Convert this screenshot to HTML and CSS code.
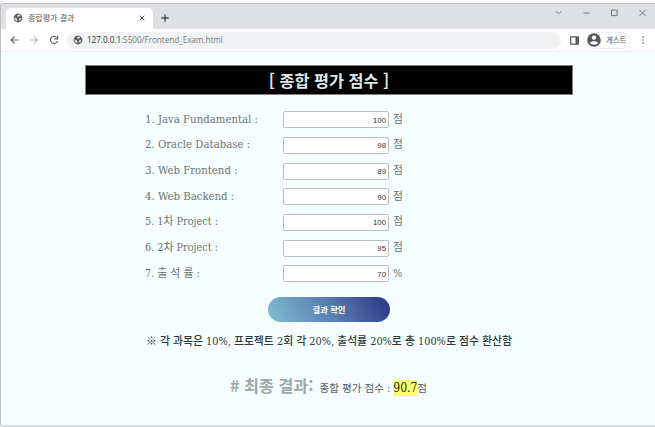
FILE: index.html
```html
<!DOCTYPE html>
<html lang="ko">
<head>
<meta charset="UTF-8">
<title>종합평가 결과</title>
<link rel="stylesheet" href="styles.css">
</head>
<body>
<svg class="defs" width="0" height="0"><symbol id="globe" viewBox="0 0 10 10"><circle cx="5" cy="5" r="4.4" fill="#5b5e62"/><path d="M1.4 4.3 3.8 5.6 4.5 8.2C2.7 8 1.3 6.5 1.4 4.3M5 1.4l2.3.5L6 3.7 4.1 3.5zM6.3 5.2l2.2.2L7 7.8 5.9 6.8z" fill="#e8e9eb"/></symbol></svg>
<div class="window">
  <header class="tabs">
    <div class="tab"><svg class="globe"><use href="#globe"/></svg><span class="tab-title">종합평가 결과</span>
      <svg class="close" viewBox="0 0 6 6"><path d="M.7.7l4.6 4.6M5.3.7.7 5.3"/></svg></div>
    <svg class="plus" viewBox="0 0 8 8"><path d="M4 .3v7.4M.3 4h7.4"/></svg>
    <svg class="controls" viewBox="0 0 92 8"><path d="M.8 2.2l2.7 2.7 2.7-2.7M28.5 4h6M56.5 1h5.6v5.6h-5.6zM84.6 1l5.8 5.8M90.4 1l-5.8 5.8"/></svg>
  </header>
  <nav class="toolbar">
    <svg class="nav" viewBox="0 0 50 10"><path d="M8.3 5H1M4.5 1.5 1 5l3.5 3.5"/><path class="off" d="M20 5h7.4M23.9 1.5 27.4 5l-3.5 3.5"/><path d="M46.6 2.3A3.6 3.6 0 1 0 47.5 6M47.6.8v3.1h-3.1"/></svg>
    <div class="address"><svg class="globe"><use href="#globe"/></svg><span class="url"><b>127.0.0.1</b>:5500/Frontend_Exam.html</span></div>
    <svg class="panel" viewBox="0 0 9 9"><path d="M.7.8h7.6v7.4H.7z" fill="none" stroke="#55585c" stroke-width="1.2"/><path d="M5.5 1h3v7h-3z" fill="#55585c"/></svg>
    <div class="guest"><svg class="avatar" viewBox="0 0 14 14"><circle cx="7" cy="7" r="6.8" fill="#55585c"/><circle cx="7" cy="4.6" r="2.2" fill="#fff"/><path d="M2.9 10.1C4 7.6 10 7.6 11.1 10.1 9.5 12.4 4.5 12.4 2.9 10.1" fill="#fff"/></svg><span>게스트</span></div>
    <svg class="dots" viewBox="0 0 2 8"><circle cx="1" cy="1" r=".8"/><circle cx="1" cy="4" r=".8"/><circle cx="1" cy="7" r=".8"/></svg>
  </nav>
  <main>
    <h1>[ 종합 평가 점수 ]</h1>
    <form>
      <label class="row"><span class="name subject">1. Java Fundamental :</span><input value="100"><span class="unit">점</span></label>
      <label class="row"><span class="name subject">2. Oracle Database :</span><input value="98"><span class="unit">점</span></label>
      <label class="row"><span class="name subject">3. Web Frontend :</span><input value="89"><span class="unit">점</span></label>
      <label class="row"><span class="name subject">4. Web Backend :</span><input value="90"><span class="unit">점</span></label>
      <label class="row"><span class="name">5. 1차 Project :</span><input value="100"><span class="unit">점</span></label>
      <label class="row"><span class="name">6. 2차 Project :</span><input value="95"><span class="unit">점</span></label>
      <label class="row"><span class="name">7. 출 석 률 :</span><input value="70"><span class="unit">%</span></label>
      <button type="button">결과 확인</button>
    </form>
    <p class="note">※ 각 과목은 10%, 프로젝트 2회 각 20%, 출석률 20%로 총 100%로 점수 환산함</p>
    <div class="result"><strong># 최종 결과:</strong><span class="score">종합 평가 점수 : <mark>90.7</mark>점</span></div>
  </main>
</div>
</body>
</html>
```
FILE: styles.css
```css
* { box-sizing: border-box; }
body { margin: 0; height: 427px; padding-top: 3px; overflow: hidden; background: #fafafa; font-family: "DejaVu Serif Condensed", "Noto Sans CJK KR", serif; }
.defs { position: absolute; }
svg { flex: none; display: block; }
.window { height: 424px; border: 1px solid #bdbfc1; border-width: 1px 0 2px 1px; border-bottom-color: #d5dddd; border-radius: 3px 0 0 3px; background: #f5ffff; overflow: hidden; white-space: nowrap; }
.tabs { height: 25px; padding: 4px 8px 0 5px; display: flex; background: #dee0e4; }
.tab { width: 147px; height: 21px; padding: 0 7px 1px 7px; display: flex; align-items: center; background: #fff; border-radius: 5px 5px 0 0; }
.globe { width: 10px; height: 10px; }
.tab-title { margin-left: 5px; color: #55585c; font: 8px/12px "Noto Sans CJK KR", sans-serif; }
.close { width: 6px; height: 6px; margin-left: auto; margin-right: 1px; fill: none; stroke: #45484c; }
.plus { width: 8px; height: 8px; margin: 6px 0 0 8px; stroke: #45484c; stroke-width: 1.3; }
.controls { width: 92px; height: 8px; margin: 1px 0 0 auto; fill: none; stroke: #66696c; stroke-width: .9; }
.toolbar { height: 23px; padding: 0 11px 0 9px; display: flex; align-items: center; background: #fff; border-bottom: 1px solid #e8ecec; }
.nav { width: 50px; height: 10px; fill: none; stroke: #5b5e62; stroke-width: 1.1; }
.nav .off { stroke: #bbbdc0; }
.address { width: 494px; height: 17px; margin-left: 7px; padding-left: 6px; display: flex; align-items: center; border-radius: 9px; background: #f0f2f4; }
.url { margin-left: 4px; color: #777a7e; font: 8.2px/12px "Open Sans", sans-serif; letter-spacing: -.06px; }
.url b { color: #33363a; font-weight: 400; }
.panel { width: 9px; height: 9px; margin-left: 9px; }
.guest { width: 45px; height: 17px; margin-left: 7px; padding-left: 1px; display: flex; align-items: center; border: 1px solid #eceeef; border-left: 0; border-radius: 9px; }
.avatar { width: 14px; height: 14px; }
.guest span { margin-left: 5px; color: #505357; font: 7.5px/12px "Noto Sans CJK KR", sans-serif; letter-spacing: -.2px; }
.dots { width: 2px; height: 8px; margin-left: auto; fill: #66696c; }
main { padding-top: 13px; }
h1 { width: 488px; height: 30px; margin: 0 0 0 84px; border: 1px solid #7e8080; background: #000; color: #dce6e6; text-align: center; font: 700 16.3px/28px "Noto Sans CJK KR", sans-serif; }
form { margin: 12px 0 0 144px; }
.row { display: flex; align-items: center; height: 25.65px; color: #6b7373; font-size: 10.8px; line-height: 18px; }
.name { width: 138px; }
.subject { font-size: 11.3px; }
.row input { width: 106px; height: 17px; padding: 1px 2px 0; border: 1px solid #bcbebe; border-radius: 2px; background: #fff; color: #333; text-align: right; font: 7.8px "Liberation Sans", sans-serif; }
.unit { margin-left: 4px; font-size: 10.8px; }
button { display: block; width: 122px; height: 25px; margin: 10.5px 0 0 123px; padding: 0; border: 0; border-radius: 13px; background: linear-gradient(60deg, #7eb9cf 5%, #597fb0 50%, #2e3b8b 95%); color: #fff; font: 700 8.3px/24px "Noto Sans CJK KR", sans-serif; }
.note { margin: 11px 0 0 145px; color: #303838; font-size: 10.85px; font-weight: 500; line-height: 17px; }
.result { margin: 23px 0 0 229px; display: flex; align-items: baseline; }
.result strong { color: #9ba8aa; font: 700 16.2px/24px "Noto Sans CJK KR", sans-serif; }
.score { margin-left: 6px; color: #555e5e; font-size: 10.6px; }
mark { padding: 1px 0; background: #ffff70; color: #262b10; font-size: 12px; }
```
